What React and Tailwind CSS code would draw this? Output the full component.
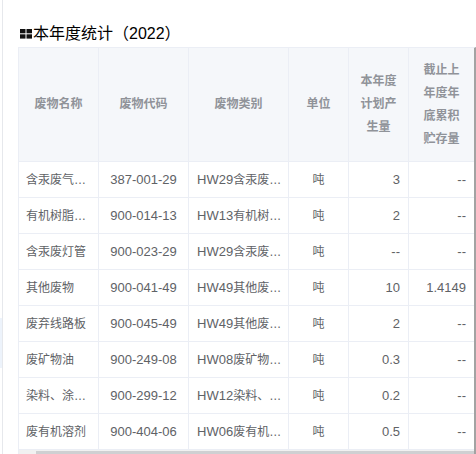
import React from "react";

const rows = [
  ["含汞废气处理废物", "387-001-29", "HW29", "含汞废物（废气处理）", "吨", "3", "--"],
  ["有机树脂类废物", "900-014-13", "HW13", "有机树脂类废物", "吨", "2", "--"],
  ["含汞废灯管", "900-023-29", "HW29", "含汞废物（废灯管）", "吨", "--", "--"],
  ["其他废物", "900-041-49", "HW49", "其他废物（含有毒物质）", "吨", "10", "1.4149"],
  ["废弃线路板", "900-045-49", "HW49", "其他废物（线路板）", "吨", "2", "--"],
  ["废矿物油", "900-249-08", "HW08", "废矿物油与含矿物油废物", "吨", "0.3", "--"],
  ["染料、涂料废物", "900-299-12", "HW12", "染料、涂料废物", "吨", "0.2", "--"],
  ["废有机溶剂", "900-404-06", "HW06", "废有机溶剂与含有机溶剂废物", "吨", "0.5", "--"],
];

const font = { fontFamily: '"Liberation Sans", "Noto Sans CJK SC", sans-serif' };

function HeadCell({ w, lines, last }) {
  return (
    <div
      className={`${w} shrink-0 h-full flex flex-col items-center justify-center text-center text-[12px] leading-[23px] font-bold text-[#909399] ${last ? "" : "border-r border-[#ebeef5]"}`}
    >
      {lines.map((l, i) => (
        <span key={i} className="block">{l}</span>
      ))}
    </div>
  );
}

export default function App() {
  return (
    <div className="flex w-[476px] h-[454px] bg-white overflow-hidden" style={font}>
      <div className="w-[2px] flex flex-col">
        <div className="h-[318px]" />
        <div className="h-[50px] bg-[#edf3fb]" />
      </div>
      <div className="w-px bg-[#e6e8ec]" />
      <div className="flex-1 flex flex-col pl-[15px]">
        <div className="pt-[22px] h-[46px] flex items-start">
          <div className="h-[24px] flex items-center pl-[2px] text-[16px] leading-[24px] text-black">
            <svg width="12" height="10" viewBox="0 0 12 10" className="mr-[1px] mb-[1px]">
              <rect x="0" y="0" width="5.5" height="4.3" fill="#111" />
              <rect x="6.5" y="0" width="5.5" height="4.3" fill="#111" />
              <rect x="0" y="5.3" width="5.5" height="4.3" fill="#111" />
              <rect x="6.5" y="5.3" width="5.5" height="4.3" fill="#111" />
            </svg>
            <span>本年度统计（2022）</span>
          </div>
        </div>
        <div className="mt-[1px] flex-1 flex flex-col border-l border-t border-[#ebeef5] border-r-2 border-r-[#a3a3a3]">
          <div className="h-[114px] flex bg-[#f5f7fa] border-b border-[#ebeef5]">
            <HeadCell w="w-[80px]" lines={["废物名称"]} />
            <HeadCell w="w-[90px]" lines={["废物代码"]} />
            <HeadCell w="w-[100px]" lines={["废物类别"]} />
            <HeadCell w="w-[60px]" lines={["单位"]} />
            <HeadCell w="w-[60px]" lines={["本年度", "计划产", "生量"]} />
            <HeadCell w="w-[65px]" lines={["截止上", "年度年", "底累积", "贮存量"]} last />
          </div>
          {rows.map((r, i) => (
            <div key={i} className="h-[36px] flex border-b border-[#ebeef5] text-[12px] text-[#606266]">
              <div className="w-[80px] shrink-0 h-full flex items-center border-r border-[#ebeef5] px-[7px]">
                <div className="w-full min-w-0 truncate">{r[0]}</div>
              </div>
              <div className="w-[90px] shrink-0 h-full flex items-center justify-center border-r border-[#ebeef5] text-[13px]">
                {r[1]}
              </div>
              <div className="w-[100px] shrink-0 h-full flex items-center border-r border-[#ebeef5] pl-[8px] pr-[6px]">
                <div className="w-full min-w-0 truncate">
                  <span className="text-[13px]">{r[2]}</span>
                  {r[3]}
                </div>
              </div>
              <div className="w-[60px] shrink-0 h-full flex items-center justify-center border-r border-[#ebeef5]">
                {r[4]}
              </div>
              <div className="w-[60px] shrink-0 h-full flex items-center justify-end border-r border-[#ebeef5] pr-[8px] text-[13px]">
                {r[5]}
              </div>
              <div className="w-[65px] shrink-0 h-full flex items-center justify-end pr-[8px] text-[13px]">
                {r[6]}
              </div>
            </div>
          ))}
          <div className="h-[4px] bg-[#f1f1f1] flex">
            <div className="ml-[17px] mt-[1px] h-[3px] flex-1 bg-[#cfd0d2]" />
          </div>
        </div>
      </div>
    </div>
  );
}
